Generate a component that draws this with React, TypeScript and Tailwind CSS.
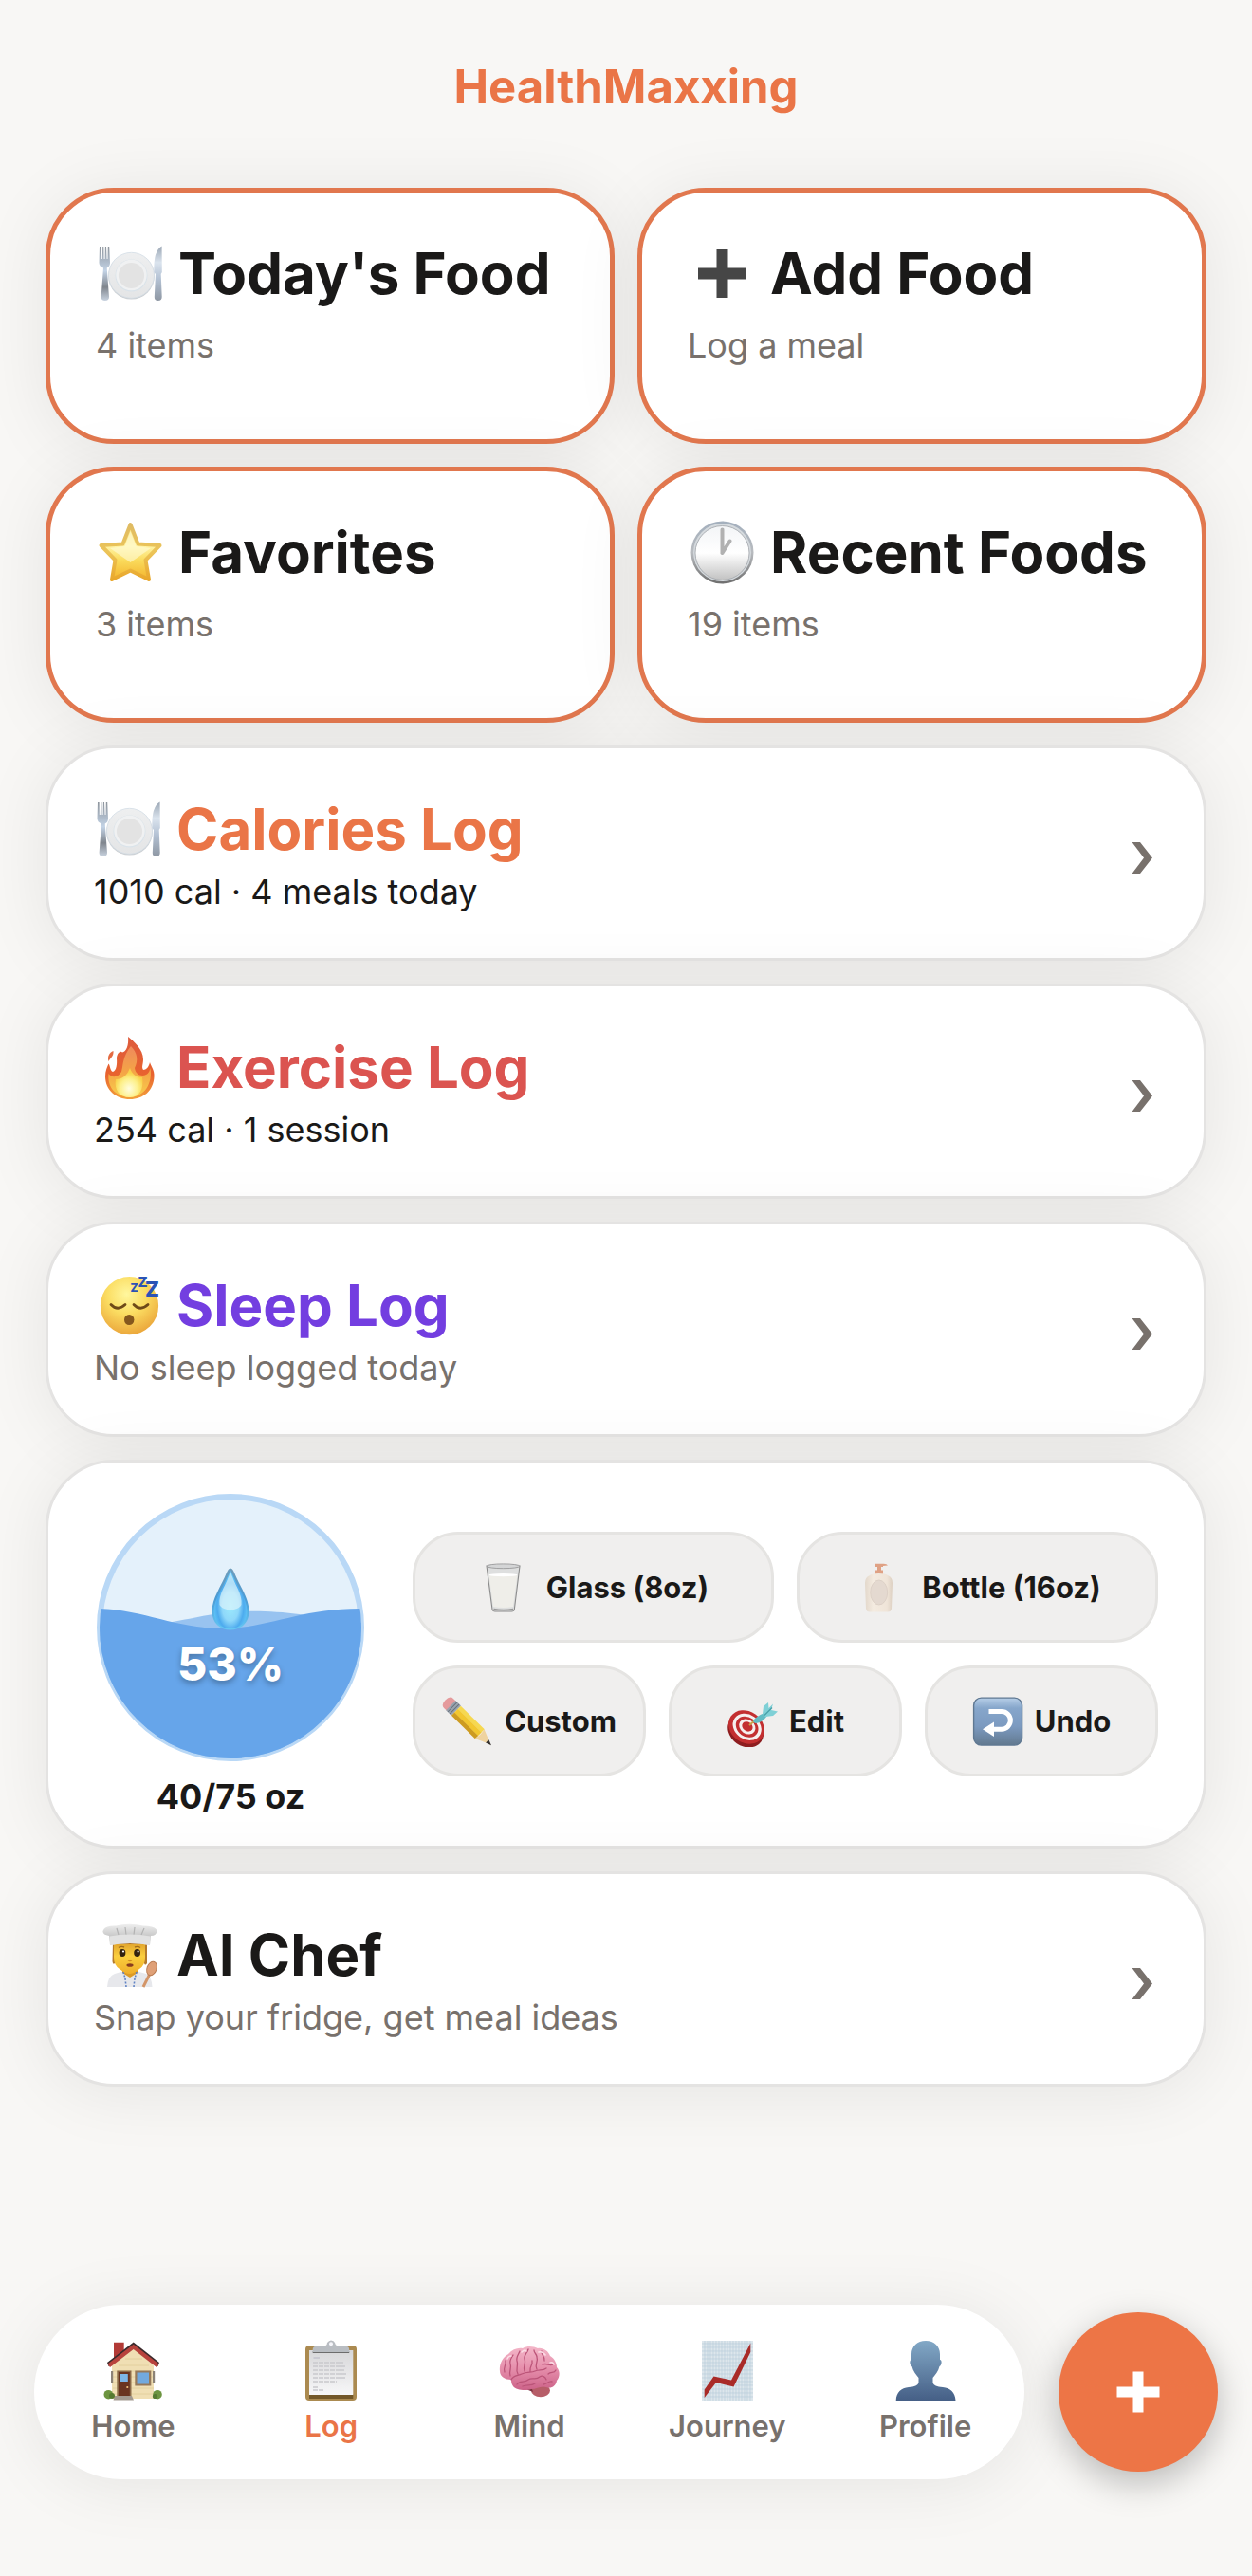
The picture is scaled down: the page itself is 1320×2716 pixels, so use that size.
import type { ReactNode } from 'react';

interface IconProps {
    className?: string;
}

function PlateIcon({ className }: IconProps) {
    return (
        <svg viewBox="0 0 75 75" className={className} aria-hidden="true">
            <defs>
                <linearGradient id="plateCutlery" x1="0" y1="0" x2="0" y2="1">
                    <stop offset="0" stopColor="#8d949c" />
                    <stop offset="0.45" stopColor="#c3d3e6" />
                    <stop offset="0.75" stopColor="#7f858d" />
                    <stop offset="1" stopColor="#c9d3e0" />
                </linearGradient>
                <linearGradient id="plateKnife" x1="0" y1="0" x2="0" y2="1">
                    <stop offset="0" stopColor="#9aa6b4" />
                    <stop offset="0.3" stopColor="#dbe4ee" />
                    <stop offset="0.6" stopColor="#b4c2d4" />
                    <stop offset="1" stopColor="#8e97a3" />
                </linearGradient>
                <linearGradient id="plateRim" x1="0" y1="0" x2="0" y2="1">
                    <stop offset="0" stopColor="#eeeff0" />
                    <stop offset="1" stopColor="#e4e5e6" />
                </linearGradient>
            </defs>
            <circle cx="37.5" cy="40.2" r="24.3" fill="#cccfd2" />
            <circle cx="37.5" cy="39.3" r="24" fill="url(#plateRim)" stroke="#d3dde6" strokeWidth="0.8" />
            <circle cx="37.5" cy="39.5" r="17" fill="#dae3ea" />
            <circle cx="37.5" cy="39" r="16.2" fill="#f0f1f2" />
            <circle cx="37.5" cy="39.5" r="13.6" fill="#e3e3e3" />
            <path
                d="M4 9 L5.6 9 L5.8 22 L6.8 22 L7.2 9 L8.3 9 L8.6 22 L9.6 22 L9.9 9 L11 9 L11.6 22 L12.5 22 L12.8 9 L14.2 9 L15 26 Q15 30 11.7 31.5 L14 62 Q14 66 9.8 66 Q5.6 66 5.6 62 L8 31.5 Q3.6 30 3.5 26 Z"
                fill="url(#plateCutlery)"
            />
            <path
                d="M69.6 8.5 L69.8 36 L68.7 38 L69.7 62 Q69.7 66 65.6 66 Q61.7 66 61.8 62 L63 38 L61.4 36 Q60.6 13 69.6 8.5 Z"
                fill="url(#plateKnife)"
            />
        </svg>
    );
}

function PlusIcon({ className }: IconProps) {
    return (
        <svg viewBox="0 0 75 75" className={className} aria-hidden="true">
            <path d="M30.5 12 H42.5 V31.500 H62 V43.500 H42.5 V63 H30.5 V43.500 H11 V31.500 H30.5 Z" fill="#464646" />
        </svg>
    );
}

function StarIcon({ className }: IconProps) {
    return (
        <svg viewBox="0 0 75 75" className={className} aria-hidden="true">
            <defs>
                <linearGradient id="starFill" x1="0" y1="0" x2="0" y2="1">
                    <stop offset="0" stopColor="#f8dc74" />
                    <stop offset="0.4" stopColor="#fff3a4" />
                    <stop offset="0.65" stopColor="#fadb5c" />
                    <stop offset="1" stopColor="#f3b32c" />
                </linearGradient>
                <linearGradient id="starEdge" x1="0" y1="0" x2="0" y2="1">
                    <stop offset="0" stopColor="#dfbb63" />
                    <stop offset="0.5" stopColor="#ecc458" />
                    <stop offset="1" stopColor="#e9a72b" />
                </linearGradient>
            </defs>
            <path
                d="M36.5 8 L44.5 28.5 L67.5 30 L52.500 45.5 L56 66 L36.5 56.5 L17 66 L20.500 45.5 L5.500 30 L28.500 28.5 Z"
                fill="url(#starFill)"
                stroke="url(#starEdge)"
                strokeWidth="4"
                strokeLinejoin="round"
            />
            <path d="M36.5 15 L42.500 31 L58 33 L36.5 48 L15 33 L30.500 31 Z" fill="#fffbd9" opacity="0.6" />
        </svg>
    );
}

function ClockIcon({ className }: IconProps) {
    return (
        <svg viewBox="0 0 75 75" className={className} aria-hidden="true">
            <defs>
                <linearGradient id="clockRim" x1="0" y1="0" x2="0" y2="1">
                    <stop offset="0" stopColor="#a3afbd" />
                    <stop offset="0.5" stopColor="#b8bbbf" />
                    <stop offset="1" stopColor="#6e6e6e" />
                </linearGradient>
                <linearGradient id="clockFace" x1="0" y1="0" x2="0" y2="1">
                    <stop offset="0" stopColor="#f3f5f7" />
                    <stop offset="0.5" stopColor="#ffffff" />
                    <stop offset="1" stopColor="#c2c2c2" />
                </linearGradient>
            </defs>
            <circle cx="36.5" cy="37.5" r="33" fill="url(#clockRim)" />
            <circle cx="36.5" cy="37.5" r="30.5" fill="#d5dade" />
            <circle cx="36.5" cy="38" r="28.5" fill="url(#clockFace)" stroke="#9fa3a8" strokeWidth="0.8" />
            <path
                d="M36.5 38 V13.5 M36.5 38 L44.5 25.5"
                stroke="#b1b1b1"
                strokeWidth="4"
                strokeLinecap="round"
                strokeLinejoin="round"
                fill="none"
            />
        </svg>
    );
}

function FireIcon({ className }: IconProps) {
    return (
        <svg viewBox="0 0 75 75" className={className} aria-hidden="true">
            <defs>
                <linearGradient id="fireOuter" x1="0" y1="0" x2="0" y2="1">
                    <stop offset="0" stopColor="#dd5a3c" />
                    <stop offset="0.6" stopColor="#e8632f" />
                    <stop offset="1" stopColor="#f3a03a" />
                </linearGradient>
                <linearGradient id="fireMid" x1="0" y1="0" x2="0" y2="1">
                    <stop offset="0" stopColor="#ef8a5c" />
                    <stop offset="0.5" stopColor="#f4a446" />
                    <stop offset="1" stopColor="#f8cf4c" />
                </linearGradient>
                <radialGradient id="fireCore" cx="0.5" cy="0.7" r="0.55">
                    <stop offset="0" stopColor="#fffde0" />
                    <stop offset="0.6" stopColor="#fdf08a" />
                    <stop offset="1" stopColor="#f8d24a" />
                </radialGradient>
            </defs>
            <path d="M20.5 20 C21 26 17.500 27 15.5 31 C14 26 16 22 20.5 20 Z" fill="#e46b42" />
            <path
                d="M36 5 C42 10 52 18 52 29 C52 34 50 37 52 40 C55 40 58 37 59 32 C60 36 64 40 63.5 47 C63 62 52 71 38 71 C23 71 12 61 12 47 C12 41 14 37 15.5 33.500 C17 35 17 41 20 42 C24 41 24.500 33 24 28 C24 24 27 19 30 21.500 C34 21 37 14 36 5 Z"
                fill="url(#fireOuter)"
            />
            <path
                d="M39 15 C46 22 47 30 43 38 C44 46 51 47 55 45 C58 44 59 40 59.5 38 C62 54 54 68 38 69 C22 68 14 58 15.5 44 C18 48 25 49 29 42 C31 35 30 26 39 15 Z"
                fill="url(#fireMid)"
            />
            <path
                d="M38 38 C40 45 46 48 51 48 C53 60 48 69 38 69 C27 69 21 61 23 50 C30 50 35 46 38 38 Z"
                fill="url(#fireCore)"
            />
        </svg>
    );
}

function SleepIcon({ className }: IconProps) {
    return (
        <svg viewBox="0 0 75 75" className={className} aria-hidden="true">
            <defs>
                <radialGradient id="sleepFace" cx="0.45" cy="0.3" r="0.75">
                    <stop offset="0" stopColor="#fff79e" />
                    <stop offset="0.45" stopColor="#fbdd62" />
                    <stop offset="1" stopColor="#e9a036" />
                </radialGradient>
            </defs>
            <circle cx="37.5" cy="37.7" r="30.6" fill="url(#sleepFace)" />
            <path
                d="M18 36.5 Q25 44 33 36.5 M42 36.5 Q49 44 57 36.5"
                stroke="#6e4a18"
                strokeWidth="2.8"
                strokeLinecap="round"
                fill="none"
            />
            <ellipse cx="37.2" cy="52.5" rx="5.2" ry="5.6" fill="#85571d" />
            <g fill="#2b53b4" fontFamily="Inter, sans-serif" fontWeight="800">
                <text x="38.5" y="22.500" fontSize="12">Z</text>
                <text x="46.5" y="17.500" fontSize="15">Z</text>
                <text x="54" y="28" fontSize="22">Z</text>
            </g>
        </svg>
    );
}

function ChefIcon({ className }: IconProps) {
    return (
        <svg viewBox="0 0 75 75" className={className} aria-hidden="true">
            <defs>
                <linearGradient id="chefFace" x1="0" y1="0" x2="0" y2="1">
                    <stop offset="0" stopColor="#e3a72e" />
                    <stop offset="0.4" stopColor="#fbcf3e" />
                    <stop offset="1" stopColor="#efae2b" />
                </linearGradient>
                <linearGradient id="chefHat" x1="0" y1="0" x2="0" y2="1">
                    <stop offset="0" stopColor="#efefef" />
                    <stop offset="0.6" stopColor="#c6c6c6" />
                    <stop offset="1" stopColor="#e6e6e6" />
                </linearGradient>
            </defs>
            <path d="M14 71 Q15 59 22 57 L32 54 H44 L55 57 Q61 60 61.5 71 Z" fill="#e7e8ec" />
            <path d="M30 50 H46 V56 L38 61 L30 56 Z" fill="#dc9a26" />
            <path d="M31 55 L33 62 L34 71 M45 55 L43 62 L42 71" stroke="#5f82c4" strokeWidth="1.6" strokeDasharray="2 1.6" fill="none" />
            <path d="M20 24 H56 V46 Q54 49 53 46 V30 H22 V46 Q20 48 19.5 44 Z" fill="#b47a2b" />
            <path d="M21 26 H54 V40 Q54 48 48 52 Q42 57 37.5 57 Q33 57 27 52 Q21 48 21 40 Z" fill="url(#chefFace)" />
            <path d="M26 29.5 Q29 27.5 32 29 M43 29 Q46 27.5 49 29.5" stroke="#a06c1b" strokeWidth="1.4" fill="none" />
            <ellipse cx="30" cy="35" rx="3.4" ry="4" fill="#33220f" />
            <ellipse cx="45.6" cy="35" rx="3.4" ry="4" fill="#33220f" />
            <circle cx="31" cy="33.5" r="1.1" fill="#fff" />
            <circle cx="46.6" cy="33.5" r="1.1" fill="#fff" />
            <path d="M36 42.5 Q38 44.5 40 42.5" stroke="#cf8d20" strokeWidth="1.4" fill="none" />
            <ellipse cx="38" cy="48" rx="3.6" ry="1.8" fill="#8a3d1f" />
            <path
                d="M17 27 L16 17 Q9 16 9.5 12 Q11 6 23 6.5 Q37 3 52 6.5 Q66 7 66.5 12 Q66 17 60 17 L59 27 Q38 23 17 27 Z"
                fill="url(#chefHat)"
            />
            <path d="M24 9 L26 16 M33 8 L34 16 M43 8 L42 16 M53 9 L50 16" stroke="#b3b3b3" strokeWidth="1.2" />
            <path d="M16.5 17.5 Q38 13.5 59.7 17.5 L59 27 Q38 23 17 27 Z" fill="#e2e2e2" />
            <path d="M59 57 L52 71" stroke="#d39568" strokeWidth="3" />
            <ellipse cx="61" cy="51.5" rx="5" ry="7.5" transform="rotate(20 61 51.5)" fill="#dfa077" stroke="#b97c53" strokeWidth="1" />
        </svg>
    );
}

function GlassIcon({ className }: IconProps) {
    return (
        <svg viewBox="0 0 54 54" className={className} aria-hidden="true">
            <path d="M9 4 L15 50 Q15.4 52 18 52 H35.5 Q38 52 38.3 50 L44 4 Z" fill="#dedfdf" stroke="#8b8b8b" strokeWidth="1.1" />
            <path d="M11.5 13.5 L16 47 Q27 49 37 47 L41.5 13.5 Q26 11.5 11.5 13.5 Z" fill="#efeee9" />
            <ellipse cx="26.5" cy="13.6" rx="15" ry="1.7" fill="#ffffff" />
            <ellipse cx="26.5" cy="4.3" rx="17.4" ry="2.4" fill="#d4d5d6" stroke="#98999a" strokeWidth="0.9" />
            <path d="M16.5 49.5 Q27 51.5 37 49.5" stroke="#9a9a9a" strokeWidth="1.6" fill="none" />
        </svg>
    );
}

function BottleIcon({ className }: IconProps) {
    return (
        <svg viewBox="0 0 54 54" className={className} aria-hidden="true">
            <defs>
                <linearGradient id="bottleBody" x1="0" y1="0" x2="1" y2="0">
                    <stop offset="0" stopColor="#e3d8cb" />
                    <stop offset="0.3" stopColor="#f4ebe0" />
                    <stop offset="0.8" stopColor="#efe4d8" />
                    <stop offset="1" stopColor="#ddd0c2" />
                </linearGradient>
            </defs>
            <path d="M23 1.8 H31 Q35 1.6 36 3.4 L31 4 V5 H29 V8.5 H31 V13 H22 V8.5 H25 V5 H23 Z" fill="#dfa184" />
            <path d="M17 14 Q19 12 26.5 12 Q34 12 36 14 Q41 16 41 22 L40 49 Q39.5 52.5 36 52.5 H17 Q13.5 52.5 13 49 L12 22 Q12 16 17 14 Z" fill="url(#bottleBody)" />
            <ellipse cx="26.7" cy="32" rx="9" ry="13" fill="#e4d9d0" stroke="#d9cdc3" strokeWidth="0.8" />
        </svg>
    );
}

function PencilIcon({ className }: IconProps) {
    return (
        <svg viewBox="0 0 54 54" className={className} aria-hidden="true">
            <g transform="translate(3.5 4.5) rotate(44.5)">
                <path d="M5 -7 H9 V7 H5 Q0 7 0 0 Q0 -7 5 -7 Z" fill="#e59a9c" />
                <rect x="8" y="-7.2" width="8" height="14.4" fill="#9aa3ae" />
                <path d="M10.5 -7.2 V7.2 M13.5 -7.2 V7.2" stroke="#68717c" strokeWidth="1" />
                <rect x="16" y="-7" width="35" height="4.6" fill="#f6d850" />
                <rect x="16" y="-2.6" width="35" height="5.4" fill="#f2c72f" />
                <rect x="16" y="2.6" width="35" height="4.4" fill="#cd9b20" />
                <path d="M50.5 -7 L67 0 L50.5 7 Q53 0 50.5 -7 Z" fill="#efd3a0" />
                <path d="M62 -2.3 L68 0 L62 2.3 Z" fill="#33302e" />
            </g>
        </svg>
    );
}

function TargetIcon({ className }: IconProps) {
    return (
        <svg viewBox="0 0 54 54" className={className} aria-hidden="true">
            <g transform="rotate(35 19 34)">
                <ellipse cx="21.5" cy="35.5" rx="20" ry="16.5" fill="#8d1d1f" />
                <ellipse cx="20" cy="32" rx="20" ry="16.5" fill="#c32f30" />
                <ellipse cx="20.5" cy="31.5" rx="16" ry="13" fill="#f6efee" />
                <ellipse cx="20.5" cy="31.5" rx="12.6" ry="10.2" fill="#c32f30" />
                <ellipse cx="20.5" cy="31.2" rx="9.2" ry="7.4" fill="#f6efee" />
                <ellipse cx="20.5" cy="31" rx="6" ry="4.8" fill="#c32f30" />
            </g>
            <path d="M24 31 L31 25" stroke="#c9a24a" strokeWidth="2" />
            <path d="M28 27 Q30 22 40 18 L43 21 Q37 29 30 29 Z" fill="#62bcc4" />
            <path d="M38 19 L39 11 L44 7 L44.5 13 L49 8.5 L47 15 L54 16.5 L49 21 L41 22 Z" fill="#7fd0d6" />
            <path d="M40 20.5 L48 12.5" stroke="#479fa8" strokeWidth="1.2" />
        </svg>
    );
}

function UndoIcon({ className }: IconProps) {
    return (
        <svg viewBox="0 0 54 54" className={className} aria-hidden="true">
            <defs>
                <linearGradient id="undoFill" x1="0" y1="0" x2="0" y2="1">
                    <stop offset="0" stopColor="#b7cfe8" />
                    <stop offset="0.22" stopColor="#86a6cb" />
                    <stop offset="0.6" stopColor="#7c9ac0" />
                    <stop offset="1" stopColor="#62798f" />
                </linearGradient>
            </defs>
            <rect x="1.6" y="2.1" width="51" height="50" rx="8" fill="url(#undoFill)" stroke="#5f7892" strokeWidth="1.4" />
            <path d="M17.5 16.5 H31 A9.3 9.3 0 0 1 31 35.2 H21" stroke="#ffffff" strokeWidth="5" fill="none" />
            <path d="M11 35.2 L23 27.5 V43 Z" fill="#ffffff" />
        </svg>
    );
}

function HouseIcon({ className }: IconProps) {
    return (
        <svg viewBox="0 0 64 64" className={className} aria-hidden="true">
            <path d="M12 2.7 H22.7 V14 L12 22 Z" fill="#b23a36" />
            <path d="M32.5 8 L54 27 V62 H10 V27 Z" fill="#f0dfb4" />
            <path d="M11 33 H54 M11 39 H54 M11 45 H54 M11 51 H54 M11 57 H54 M17 27 H49 M24 20 H42" stroke="#dfcb9a" strokeWidth="0.8" />
            <path d="M32.7 2.5 L60 24 L58.5 28 L32.7 8.5 L6.5 28 L5 24 Z" fill="#3b2a2c" />
            <path d="M32.7 4.800 L59.500 25.500 L57 29 L32.7 10 L8 29 L5.500 25.500 Z" fill="#b8433d" />
            <rect x="9" y="33" width="2.2" height="13" fill="#8c8377" />
            <rect x="53" y="33" width="2.2" height="13" fill="#8c8377" />
            <rect x="15.3" y="32.5" width="15.2" height="27" fill="#8b6a48" />
            <rect x="17" y="34" width="11.8" height="26" fill="#6a3420" />
            <rect x="18.8" y="36" width="8" height="8" fill="#7db5e6" />
            <circle cx="26.3" cy="50" r="1.1" fill="#f3c37b" />
            <rect x="34.3" y="32.5" width="17" height="16" fill="#96795a" />
            <rect x="36.5" y="34.5" width="12.5" height="12" fill="#72a9de" />
            <path d="M13 59 H31 L33 63.5 H11.5 Z" fill="#a39a90" />
            <circle cx="6.3" cy="57.7" r="4.8" fill="#6d9440" />
            <circle cx="10" cy="59" r="3" fill="#557a31" />
            <circle cx="58" cy="57.7" r="4.8" fill="#6d9440" />
            <circle cx="55.5" cy="59.5" r="2.6" fill="#557a31" />
        </svg>
    );
}

function ClipboardIcon({ className }: IconProps) {
    return (
        <svg viewBox="0 0 64 64" className={className} aria-hidden="true">
            <defs>
                <linearGradient id="clipPaper" x1="0" y1="0" x2="0" y2="1">
                    <stop offset="0" stopColor="#d7d7d9" />
                    <stop offset="1" stopColor="#f7f7f8" />
                </linearGradient>
            </defs>
            <rect x="5" y="6" width="54" height="58" rx="4" fill="#ab8a50" />
            <path d="M9 57 H55.3 V62 H9 Z" fill="#735829" />
            <rect x="9" y="11" width="46.3" height="47" fill="url(#clipPaper)" />
            <path d="M13.5 19 H20" stroke="#bcbcc8" strokeWidth="1.2" />
            <path d="M13 24 H45 M13 28 H47 M13 32 H46 M13 36 H48 M13 40 H47 M13 44 H38 M13 50 H19 M13 53 H24" stroke="#c9c9cd" strokeWidth="1.4" strokeDasharray="5 1" />
            <rect x="12.7" y="12" width="38.5" height="2" fill="#6c6c6c" />
            <path d="M12.7 13 V10 Q13 6.5 17 6.5 H26 Q28 6 28 3 Q30 0.5 32 0.5 Q35 0.5 36 3 Q36.5 6 38.5 6.5 H47 Q51 6.5 51.2 10 V13 Z" fill="#b9bdc2" />
            <circle cx="32" cy="4.2" r="2" fill="#f6f6fb" />
        </svg>
    );
}

function BrainIcon({ className }: IconProps) {
    return (
        <svg viewBox="0 0 64 64" className={className} aria-hidden="true">
            <defs>
                <linearGradient id="brainFill" x1="0" y1="0" x2="0" y2="1">
                    <stop offset="0" stopColor="#f3b6c8" />
                    <stop offset="0.5" stopColor="#e68fac" />
                    <stop offset="1" stopColor="#cc6288" />
                </linearGradient>
            </defs>
            <ellipse cx="44" cy="53.5" rx="10" ry="6.8" fill="#b75d68" />
            <path d="M26 51 L36 55 L34 49 Z" fill="#7c3342" />
            <path
                d="M1 33 C0 26 4 18 10 15 C14 10 20 8 25 9 C30 6 37 7 41 9 C47 8 52 12 54 17 C59 20 61 25 61 29 C65 33 64 40 61 43 C60 49 55 52 50 50 C44 48 40 52 34 52 C28 54 18 53 15 49 C13 46 13 44 13 42 C7 42 1 39 1 33 Z"
                fill="url(#brainFill)"
            />
            <path
                d="M13 42 C15 37 20 38 24 36 C30 33 34 35 38 33 C43 31 46 33 50 30 M6 34 C4 29 8 27 7 22 M12 38 C10 33 14 31 12 25 C11 21 14 18 15 16 M20 36 C17 31 21 27 19 22 C18 18 21 15 22 12 M27 33 C25 28 29 25 27 20 C26 16 30 14 31 10 M33 33 C32 28 36 27 35 22 M40 31 C37 26 42 24 40 18 C40 15 37 14 37 11 M45 12 C44 16 49 17 48 22 M46 26 C51 24 53 28 57 26 M52 36 C55 33 58 36 60 32 M19 47 C22 42 27 46 31 42 C35 39 39 43 43 39 C46 37 49 39 50 42 M47 47 C51 47 52 43 56 44 M25 49 C30 47 34 49 38 46"
                stroke="#bb5478"
                strokeWidth="1.3"
                strokeLinecap="round"
                fill="none"
            />
            <path d="M9 20 Q10 17 13 17 M24 13 Q27 10 29 12 M42 13 Q46 12 49 16 M54 24 Q57 23 58 26" stroke="#fbdce5" strokeWidth="1.6" strokeLinecap="round" fill="none" />
        </svg>
    );
}

function ChartIcon({ className }: IconProps) {
    return (
        <svg viewBox="0 0 64 64" className={className} aria-hidden="true">
            <rect x="5" y="1" width="54" height="63" fill="#dde6ec" />
            <path
                d="M8 1V64 M11 1V64 M14 1V64 M17 1V64 M20 1V64 M23 1V64 M26 1V64 M29 1V64 M32 1V64 M35 1V64 M38 1V64 M41 1V64 M44 1V64 M47 1V64 M50 1V64 M53 1V64 M56 1V64 M5 4H59 M5 8H59 M5 12H59 M5 16H59 M5 20H59 M5 24H59 M5 28H59 M5 32H59 M5 36H59 M5 40H59 M5 44H59 M5 48H59 M5 52H59 M5 56H59 M5 60H59"
                stroke="#b9cddb"
                strokeWidth="0.7"
            />
            <path d="M7.7 52.5 L17.5 38.5 L36 42.5 L56.3 3.5 V13 L38.5 49.5 L20 45 L7.7 61 Z" fill="#a92b28" />
        </svg>
    );
}

function PersonIcon({ className }: IconProps) {
    return (
        <svg viewBox="0 0 64 64" className={className} aria-hidden="true">
            <defs>
                <linearGradient id="personFill" x1="0" y1="0" x2="0" y2="1">
                    <stop offset="0" stopColor="#82a8c6" />
                    <stop offset="1" stopColor="#455f86" />
                </linearGradient>
            </defs>
            <path
                d="M32 1 C41 1 47 7 47 15 V21 C49.5 21 49 27 46.5 28 C45.5 33 42 37 39.5 40 V45 C40 48 44 49.5 50 50 C58 51 63 55 63.5 64 H0.7 C1 55 6 51 14 50 C20 49.5 24 48 24.5 45 V40 C22 37 18.5 33 17.5 28 C15 27 14.5 21 17 21 V15 C17 7 23 1 32 1 Z"
                fill="url(#personFill)"
            />
        </svg>
    );
}

function DropIcon({ className }: IconProps) {
    return (
        <svg viewBox="0 0 66 66" className={className} aria-hidden="true">
            <defs>
                <linearGradient id="dropEdge" x1="0" y1="0" x2="0" y2="1">
                    <stop offset="0" stopColor="#6f9dbb" />
                    <stop offset="0.5" stopColor="#4b9bd4" />
                    <stop offset="1" stopColor="#66c8f4" />
                </linearGradient>
                <radialGradient id="dropCore" cx="0.5" cy="0.62" r="0.5">
                    <stop offset="0" stopColor="#9beafd" />
                    <stop offset="0.5" stopColor="#8fd8fa" />
                    <stop offset="0.8" stopColor="#4dabee" />
                    <stop offset="1" stopColor="#5cc0f5" />
                </radialGradient>
            </defs>
            <path
                d="M33 0.5 C35 0.5 36 3 37 5 C43 20 52.5 32 52.5 46 C52.5 58 44 65.5 33 65.5 C22 65.5 13.5 58 13.5 46 C13.5 32 23 20 29 5 C30 3 31 0.5 33 0.5 Z"
                fill="url(#dropEdge)"
            />
            <path d="M33 2.500 C39 18 50.500 32 50.500 46 C50.500 57 43 64 33 64 C23 64 15.500 57 15.500 46 C15.500 32 27 18 33 2.500 Z" fill="url(#dropCore)" />
            <path d="M33 4 C37 17 46 28 44.500 39 C41 46 25 46 21.500 39 C20 28 29 17 33 4 Z" fill="#dcf3fb" opacity="0.7" />
        </svg>
    );
}

function Chevron() {
    return (
        <svg viewBox="0 0 22 33" className="mt-[10px] mr-[6px] h-[33px] w-[22px] shrink-0" aria-hidden="true">
            <path d="M0.5 0 H9 L22 16.5 L9 33 H0.5 L13 16.5 Z" fill="#78716c" />
        </svg>
    );
}

const quickCards = [
    { title: "Today's Food", subtitle: '4 items', Icon: PlateIcon },
    { title: 'Add Food', subtitle: 'Log a meal', Icon: PlusIcon },
    { title: 'Favorites', subtitle: '3 items', Icon: StarIcon },
    { title: 'Recent Foods', subtitle: '19 items', Icon: ClockIcon },
];

const tabs = [
    { label: 'Home', Icon: HouseIcon, active: false },
    { label: 'Log', Icon: ClipboardIcon, active: true },
    { label: 'Mind', Icon: BrainIcon, active: false },
    { label: 'Journey', Icon: ChartIcon, active: false },
    { label: 'Profile', Icon: PersonIcon, active: false },
];

interface LogRowProps {
    icon: ReactNode;
    title: string;
    titleClass: string;
    subtitle: string;
    subtitleClass: string;
}

function LogRow({ icon, title, titleClass, subtitle, subtitleClass }: LogRowProps) {
    return (
        <button className="flex w-full items-center justify-between rounded-[72px] border-[3px] border-[#e4e3e2] bg-white px-12 py-[45px] text-left shadow-[0_6px_72px_rgba(0,0,0,0.08)]">
            <span className="block">
                <span className="flex items-center gap-3">
                    {icon}
                    <span className={`text-[60px] leading-[81px] font-bold ${titleClass}`}>{title}</span>
                </span>
                <span className={`block text-[36px] leading-[50px] ${subtitleClass}`}>{subtitle}</span>
            </span>
            <Chevron />
        </button>
    );
}

interface WaterButtonProps {
    icon: ReactNode;
    label: string;
    gapClass: string;
}

function WaterButton({ icon, label, gapClass }: WaterButtonProps) {
    return (
        <button
            className={`flex h-[117px] flex-1 items-center justify-center rounded-[48px] border-[3px] border-[#e5e4e2] bg-[#f0efee] text-[31px] leading-9 font-bold text-[#1a1918] ${gapClass}`}
        >
            {icon}
            {label}
        </button>
    );
}

function WaterCard() {
    return (
        <section className="flex items-center gap-12 rounded-[72px] border-[3px] border-[#e4e3e2] bg-white px-12 py-[30px] shadow-[0_6px_72px_rgba(0,0,0,0.08)]">
            <div className="w-[288px] shrink-0">
                <div className="relative size-[288px]">
                    <svg viewBox="0 0 288 288" className="size-full" aria-hidden="true">
                        <defs>
                            <clipPath id="waterClip">
                                <circle cx="144" cy="144" r="138" />
                            </clipPath>
                        </defs>
                        <circle cx="144" cy="144" r="138" fill="#e4f1fb" stroke="#b9d8f6" strokeWidth="6" />
                        <g clipPath="url(#waterClip)">
                            <path d="M0 142 C60 146 90 136 120 131 C170 122 210 128 288 140 V288 H0 Z" fill="#66a5ea" opacity="0.6" />
                            <path d="M0 124 C50 124 85 145 134 145 C185 145 220 122 288 124 V288 H0 Z" fill="#66a5ea" />
                        </g>
                    </svg>
                    <div className="absolute inset-0 flex flex-col items-center justify-center gap-2 pt-1">
                        <DropIcon className="size-[66px]" />
                        <span className="text-[48px] leading-[56px] font-extrabold text-white [text-shadow:0_3px_6px_rgba(0,0,0,0.3)]">53%</span>
                    </div>
                </div>
                <p className="mt-3 text-center text-[36px] leading-[44px] font-bold text-[#1a1918]">40/75 oz</p>
            </div>
            <div className="flex flex-1 flex-col gap-6">
                <div className="grid grid-cols-2 gap-6">
                    <WaterButton icon={<GlassIcon className="size-[54px]" />} label="Glass (8oz)" gapClass="gap-[18px]" />
                    <WaterButton icon={<BottleIcon className="size-[54px]" />} label="Bottle (16oz)" gapClass="gap-[18px]" />
                </div>
                <div className="grid grid-cols-3 gap-6">
                    <WaterButton icon={<PencilIcon className="size-[54px]" />} label="Custom" gapClass="gap-3" />
                    <WaterButton icon={<TargetIcon className="size-[54px]" />} label="Edit" gapClass="gap-3" />
                    <WaterButton icon={<UndoIcon className="size-[54px]" />} label="Undo" gapClass="gap-3" />
                </div>
            </div>
        </section>
    );
}

export default function App() {
    return (
        <div className="flex min-h-screen flex-col bg-[#f8f7f5] font-['Inter',sans-serif] text-[#1a1918]">
            <header className="pt-[60px] pb-[74px] text-center">
                <h1 className="text-[49px] leading-[64px] font-bold text-[#ea7547]">HealthMaxxing</h1>
            </header>

            <main className="flex flex-col gap-6 px-12">
                <div className="grid grid-cols-2 gap-6">
                    {quickCards.map(({ title, subtitle, Icon }) => (
                        <button
                            key={title}
                            className="flex min-h-[270px] flex-col items-start rounded-[72px] border-[5px] border-[#e1774e] bg-white py-12 pl-12 text-left shadow-[0_6px_72px_rgba(0,0,0,0.08)]"
                        >
                            <span className="flex items-center gap-3">
                                <Icon className="size-[75px]" />
                                <span className="text-[60px] leading-[75px] font-bold whitespace-nowrap">{title}</span>
                            </span>
                            <span className="mt-4 text-[36px] leading-[44px] text-[#78716c]">{subtitle}</span>
                        </button>
                    ))}
                </div>

                <LogRow
                    icon={<PlateIcon className="size-[75px]" />}
                    title="Calories Log"
                    titleClass="text-[#ea7547]"
                    subtitle="1010 cal · 4 meals today"
                    subtitleClass="text-[#1a1918]"
                />
                <LogRow
                    icon={<FireIcon className="size-[75px]" />}
                    title="Exercise Log"
                    titleClass="text-[#db5450]"
                    subtitle="254 cal · 1 session"
                    subtitleClass="text-[#1a1918]"
                />
                <LogRow
                    icon={<SleepIcon className="size-[75px]" />}
                    title="Sleep Log"
                    titleClass="text-[#733ee0]"
                    subtitle="No sleep logged today"
                    subtitleClass="text-[#78716c]"
                />
                <WaterCard />
                <LogRow
                    icon={<ChefIcon className="size-[75px]" />}
                    title="AI Chef"
                    titleClass="text-[#1a1918]"
                    subtitle="Snap your fridge, get meal ideas"
                    subtitleClass="text-[#78716c]"
                />
            </main>

            <footer className="mt-auto flex items-center gap-9 px-9 pt-12 pb-[102px]">
                <nav className="grid flex-1 grid-cols-5 rounded-full bg-white py-[37px] shadow-[0_6px_72px_rgba(0,0,0,0.08)]">
                    {tabs.map(({ label, Icon, active }) => (
                        <a
                            key={label}
                            href="#"
                            className={`flex flex-col items-center gap-2 text-[31px] leading-[38px] font-semibold ${active ? 'text-[#ea7547]' : 'text-[#78716c]'}`}
                        >
                            <Icon className="size-16" />
                            {label}
                        </a>
                    ))}
                </nav>
                <button
                    aria-label="Add entry"
                    className="flex size-[168px] shrink-0 items-center justify-center rounded-full bg-[#ed7546] shadow-[0_12px_36px_rgba(0,0,0,0.25)]"
                >
                    <svg viewBox="0 0 46 46" className="size-[46px]" aria-hidden="true">
                        <path d="M17.5 1.5 H28.5 V17.5 H45.5 V28.5 H28.5 V44.5 H17.5 V28.5 H0.5 V17.5 H17.5 Z" fill="#ffffff" />
                    </svg>
                </button>
            </footer>
        </div>
    );
}
